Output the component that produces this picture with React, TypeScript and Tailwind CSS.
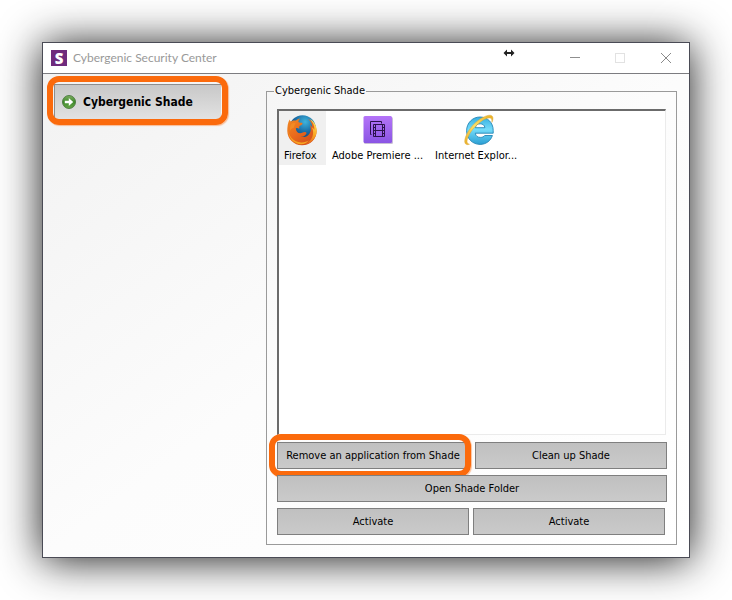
import React from 'react';

function ShadeLogo() {
  return (
    <div className="flex h-4 w-4 items-center justify-center bg-[#6f2b7d] font-['Open_Sans',sans-serif] text-[15px] leading-4 font-extrabold text-white">
      S
    </div>
  );
}

function ArrowIcon() {
  return (
    <svg width="14" height="14" viewBox="0 0 14 14" aria-hidden="true">
      <defs>
        <linearGradient id="arrow-green" x1="0" y1="0" x2="0" y2="1">
          <stop offset="0" stopColor="#7fae62" />
          <stop offset="0.5" stopColor="#3f8a2c" />
          <stop offset="1" stopColor="#6aa84a" />
        </linearGradient>
      </defs>
      <circle cx="7" cy="7" r="6.5" fill="url(#arrow-green)" stroke="#3c7030" strokeWidth="0.8" />
      <path d="M2.8 5.7h4V3l4.4 4-4.4 4V8.3h-4z" fill="#fff" />
    </svg>
  );
}

function FirefoxIcon() {
  return (
    <svg width="32" height="32" viewBox="0 0 32 32" aria-hidden="true">
      <defs>
        <radialGradient id="ff-globe" cx="0.6" cy="0.25" r="0.8">
          <stop offset="0" stopColor="#3fb4dc" />
          <stop offset="0.45" stopColor="#1b6fa8" />
          <stop offset="1" stopColor="#12305f" />
        </radialGradient>
        <linearGradient id="ff-fox" x1="0" y1="0" x2="0.8" y2="1">
          <stop offset="0" stopColor="#f08a24" />
          <stop offset="0.5" stopColor="#ea6a1c" />
          <stop offset="1" stopColor="#cf4a1c" />
        </linearGradient>
        <linearGradient id="ff-tail" x1="0.6" y1="0" x2="0.3" y2="1">
          <stop offset="0" stopColor="#ffe55c" />
          <stop offset="0.5" stopColor="#f9a722" />
          <stop offset="1" stopColor="#e25a1c" />
        </linearGradient>
      </defs>
      <circle cx="16.5" cy="14.5" r="13.3" fill="url(#ff-globe)" />
      <path
        d="M3.6 5.400c.4 1 .7 1.600 1.300 2.200 1.500-1.300 3.300-1.400 5.100-1 1.200-1.300 2.700-2 4.300-2.200-1.200 1-1.900 2.200-1.900 3.600 1 .9 3.400.4 4.100 1.200.2 1.300-1.900 2-3.200 3.100-.1.9.2 1.700-.2 2.500-1.100-.8-2.200-.9-3.300-.4.3 2.900 2 4.800 4.400 4.800 2.200 0 3.200-1.500 5-1.200 1.200.2 1.700 1.100 1 1.900-1.400 2-3.200 3-5.400 2.900 4.500 1.200 8.800-1.300 9.800-5.800.5-2.400 0-4.600-.8-6.300 1.200.7 2 1.600 2.500 2.700-.1-3.600-1.700-6.300-4.300-8.300 5.400 2.400 8.500 6.800 8.600 12.100 0 7.900-6.500 14.100-14.600 14.100S1.300 24.800 1.300 17c0-4.200.5-8.600 2.300-11.600z"
        fill="url(#ff-fox)"
      />
      <path
        d="M24.1 4.9c4.2 2.700 6.700 6.900 6.600 12-.2 7.400-6.200 13.300-13.700 14 6.300-2 9.900-6.500 10.100-12.100.1-2.200-.4-3.900-1.100-5.400 1.200.7 1.800 1.400 2.400 2.400.1-4.300-1.500-7.700-4.300-10.900z"
        fill="url(#ff-tail)"
      />
      <path
        d="M2.3 13.5c-.8 8.100 5.100 14.700 12.900 14.900 2.900.1 5.600-.6 7.700-2.100-2 3-5.500 4.400-9.200 3.900C6.200 29.100 1.300 22.100 2.300 13.500z"
        fill="#f6a522"
      />
      <path d="M5 10.200c1.400-1.300 2.900-1.500 4.500-1-.9 1.400-1.400 2.900-1.300 4.400-1.900.4-3.400 1.700-4.300 3.500-.2-2.700.1-5 1.100-6.900z" fill="#f28b24" />
    </svg>
  );
}

function PremiereIcon() {
  return (
    <svg width="30" height="30" viewBox="0 0 30 30" aria-hidden="true">
      <defs>
        <linearGradient id="pr-bg" x1="0" y1="0" x2="0" y2="1">
          <stop offset="0" stopColor="#b474f8" />
          <stop offset="1" stopColor="#8a55e4" />
        </linearGradient>
      </defs>
      <rect x="1" y="2" width="29" height="27" rx="1.5" fill="#c9bfd6" />
      <rect x="0.5" y="1" width="28.5" height="27" rx="1.5" fill="url(#pr-bg)" />
      <g fill="none" stroke="#2b124d" strokeWidth="1">
        <path d="M8.5 19.5h-1v-13h11v2" />
        <path d="M10.5 9.5h11v12h-11zM12.5 9.5v12M19.5 9.5v12M12.5 15.5h7" />
        <path d="M10.5 12.5h2M10.5 15.5h2M10.5 18.5h2M19.5 12.5h2M19.5 15.5h2M19.5 18.5h2" />
      </g>
    </svg>
  );
}

function ExplorerIcon() {
  return (
    <svg width="32" height="32" viewBox="0 0 32 32" aria-hidden="true">
      <defs>
        <linearGradient id="ie-blue" x1="0" y1="0" x2="0" y2="1">
          <stop offset="0" stopColor="#35aee0" />
          <stop offset="0.45" stopColor="#74dcfa" />
          <stop offset="1" stopColor="#2b9fd4" />
        </linearGradient>
        <linearGradient id="ie-ring" x1="1" y1="0" x2="0" y2="1">
          <stop offset="0" stopColor="#e9ae22" />
          <stop offset="0.5" stopColor="#fbe06a" />
          <stop offset="1" stopColor="#eab02b" />
        </linearGradient>
      </defs>
      <path
        fillRule="evenodd"
        d="M17 3c7.5 0 13.2 5.600 13.200 13.400v2.800H12.300c.3 2.900 2.300 4.200 5 4.200 2 0 3.500-.6 4.400-1.900h7.700c-1.700 5.300-6.400 8.900-12.300 8.900C9.500 30.400 3.600 24.600 3.600 16.800S9.500 3 17 3zM12.400 13.700h9.500c-.3-2.600-2.200-3.900-4.700-3.900s-4.400 1.300-4.800 3.900z"
        fill="url(#ie-blue)"
        stroke="#2586b5"
        strokeWidth="0.9"
      />
      <path
        d="M6.5 30.300c-3.700 1.200-5.500-.8-4.600-5C3.400 18.300 10.200 9.500 17.800 4.600c5.100-3.300 9.900-4.400 11.500-2.400 1.100 1.400.8 3.700-.4 6.200.2-2.100-.1-3.600-1.200-4.100-2.200-1-6.300.6-10.200 3.600C10.800 12.900 5.300 20.300 4.200 25.700c-.5 2.500.1 4 2.300 4.600z"
        fill="url(#ie-ring)"
        stroke="#d99f25"
        strokeWidth="0.4"
      />
    </svg>
  );
}

function ResizeCursor() {
  return (
    <svg className="absolute top-[6px] right-[174px]" width="12" height="8" viewBox="0 0 12 8" aria-hidden="true">
      <path d="M0.5 4L4 0.5V3h4V0.5L11.5 4 8 7.5V5H4v2.5z" fill="#222" />
    </svg>
  );
}

function TitleBar() {
  return (
    <header className="relative flex h-[31px] items-center border-b border-[#7c7c80] bg-white pl-2">
      <ShadeLogo />
      <h1 className="ml-[6px] font-['Lato',sans-serif] text-[12px] leading-4 text-[#999]">Cybergenic Security Center</h1>
      <ResizeCursor />
      <div className="ml-auto flex h-full">
        <button type="button" aria-label="Minimize" className="flex w-[45px] items-center justify-center">
          <svg width="12" height="12" viewBox="0 0 12 12">
            <path d="M1 5.5h10" stroke="#8f8f8f" />
          </svg>
        </button>
        <button type="button" aria-label="Maximize" disabled className="flex w-[46px] items-center justify-center">
          <svg width="12" height="12" viewBox="0 0 12 12">
            <rect x="1.5" y="1.5" width="9" height="9" fill="none" stroke="#e2e2e2" />
          </svg>
        </button>
        <button type="button" aria-label="Close" className="flex w-[46px] items-center justify-center">
          <svg width="12" height="12" viewBox="0 0 12 12">
            <path d="M1 1l10 10M11 1L1 11" stroke="#8a8a8a" />
          </svg>
        </button>
      </div>
    </header>
  );
}

function Highlight({ className = '' }: { className?: string }) {
  return (
    <span
      className={`pointer-events-none absolute rounded-xl border-6 border-[#fb6a0c] shadow-[1px_1px_1px_rgba(251,106,12,0.4)] ${className}`}
    />
  );
}

interface ActionButtonProps {
  label: string;
  highlighted?: boolean;
}

function ActionButton({ label, highlighted = false }: ActionButtonProps) {
  return (
    <div className="relative flex-1">
      <button
        type="button"
        className="h-[27px] w-full border border-[#7f7f7f] bg-linear-to-b from-[#c0c0c0] to-[#cacaca] leading-4 whitespace-nowrap"
      >
        {label}
      </button>
      {highlighted && <Highlight className="-inset-y-2 -right-[2px] -left-2" />}
    </div>
  );
}

const apps = [
  { name: 'Firefox', icon: <FirefoxIcon />, selected: true },
  { name: 'Adobe Premiere ...', icon: <PremiereIcon />, selected: false },
  { name: 'Internet Explor...', icon: <ExplorerIcon />, selected: false },
];

function AppList() {
  return (
    <ul className="mr-px flex h-[326px] items-start gap-[6px] border-t-2 border-r border-b border-l-2 border-t-[#6b6b6b] border-r-[#ebebeb] border-b-[#ebebeb] border-l-[#6b6b6b] bg-white">
      {apps.map((app) => (
        <li
          key={app.name}
          className={`flex h-[54px] flex-col items-center whitespace-nowrap ${app.selected ? 'w-[47px] bg-[#f0f0f0] pr-[7px] pl-[5px]' : 'min-w-[94px] pr-[6px]'}`}
        >
          <span className="flex h-[38px] items-center">
            <span className="flex h-8 w-8 items-center justify-center">{app.icon}</span>
          </span>
          <span className="w-full leading-[14px]">{app.name}</span>
        </li>
      ))}
    </ul>
  );
}

function Sidebar() {
  return (
    <nav className="w-[223px] shrink-0 pt-[10px] pl-[11px]">
      <div className="relative w-[167px]">
        <button
          type="button"
          className="flex h-[35px] w-full items-center gap-[7px] border-t border-l border-[#8d8d8d] bg-linear-to-b from-[#c8c8c8] to-[#e2e2e2] pl-[7px] text-[12px] leading-4 font-bold"
        >
          <ArrowIcon />
          Cybergenic Shade
        </button>
        <Highlight className="-inset-x-[7px] -top-2 -bottom-[6px]" />
      </div>
    </nav>
  );
}

export default function App() {
  return (
    <div className="min-h-screen bg-white p-[42px] font-['DejaVu_Sans_Condensed','DejaVu_Sans',sans-serif] text-[11px] text-black">
      <main className="border border-[#4a4b55] bg-white shadow-[0_2px_40px_0_rgba(0,0,0,0.9)]">
        <TitleBar />
        <div className="flex bg-linear-to-br from-[#f2f2f2] via-[#fcfcfc] to-white pr-3 pb-3">
          <Sidebar />
          <fieldset className="mt-[11px] min-w-0 flex-1 border border-[#9a9a9a] pr-[9px] pb-[9px] pl-[10px]">
            <legend className="-ml-[3px] px-px leading-3">Cybergenic Shade</legend>
            <div className="pt-3">
              <AppList />
              <div className="mt-[7px] flex flex-col gap-[6px]">
                <div className="flex gap-[6px]">
                  <ActionButton label="Remove an application from Shade" highlighted />
                  <ActionButton label="Clean up Shade" />
                </div>
                <div className="flex">
                  <ActionButton label="Open Shade Folder" />
                </div>
                <div className="mr-[2px] flex gap-1">
                  <ActionButton label="Activate" />
                  <ActionButton label="Activate" />
                </div>
              </div>
            </div>
          </fieldset>
        </div>
      </main>
    </div>
  );
}
